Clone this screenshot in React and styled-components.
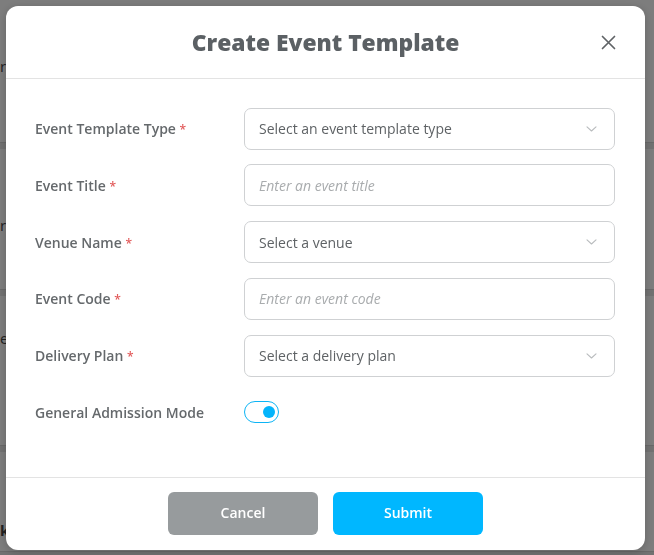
import React, { useState } from 'react';
import styled, { createGlobalStyle } from 'styled-components';

const GlobalStyle = createGlobalStyle`
    html, body {
        margin: 0;
        padding: 0;
        height: 100%;
    }
    body {
        font-family: "Open Sans", "Liberation Sans", sans-serif;
        background: #f7f7f7;
        overflow: hidden;
    }
`;

const fields = [
    { label: 'Event Template Type', type: 'select', placeholder: 'Select an event template type' },
    { label: 'Event Title', type: 'input', placeholder: 'Enter an event title' },
    { label: 'Venue Name', type: 'select', placeholder: 'Select a venue' },
    { label: 'Event Code', type: 'input', placeholder: 'Enter an event code' },
    { label: 'Delivery Plan', type: 'select', placeholder: 'Select a delivery plan' },
];

function Chevron() {
    return (
        <svg width="11" height="6" viewBox="0 0 11 6" fill="none">
            <path d="M1 0.8L5.5 5L10 0.8" stroke="#b9bcbe" strokeWidth="1.1" strokeLinecap="round" strokeLinejoin="round" />
        </svg>
    );
}

function CloseIcon() {
    return (
        <svg width="15" height="15" viewBox="0 0 15 15" fill="none">
            <path d="M1.5 1.5L13.5 13.5M13.5 1.5L1.5 13.5" stroke="#5f6366" strokeWidth="1.7" strokeLinecap="round" />
        </svg>
    );
}

function App() {
    const [gaMode, setGaMode] = useState(true);

    return (
        <>
            <GlobalStyle />
            <BackPage>
                <BackBlock height={143}><BackText top={56}>r</BackText></BackBlock>
                <BackBlock height={141}><BackText top={66}>r</BackText></BackBlock>
                <BackBlock height={150}><BackText top={32}>e</BackText></BackBlock>
                <BackBlock height={100}><BackText top={68} bold>k</BackText></BackBlock>
            </BackPage>
            <Overlay>
                <Modal>
                    <Header>
                        <Title>Create Event Template</Title>
                        <CloseButton aria-label="Close"><CloseIcon /></CloseButton>
                    </Header>
                    <Body>
                        {fields.map((f) => (
                            <Row key={f.label}>
                                <Label>{f.label} <Req>*</Req></Label>
                                {f.type === 'select' ? (
                                    <SelectBox>
                                        <span>{f.placeholder}</span>
                                        <Chevron />
                                    </SelectBox>
                                ) : (
                                    <TextInput placeholder={f.placeholder} />
                                )}
                            </Row>
                        ))}
                        <Row>
                            <Label>General Admission Mode</Label>
                            <Toggle on={gaMode} onClick={() => setGaMode(!gaMode)}>
                                <Knob on={gaMode} />
                            </Toggle>
                        </Row>
                    </Body>
                    <Footer>
                        <Button variant="cancel">Cancel</Button>
                        <Button variant="submit">Submit</Button>
                    </Footer>
                </Modal>
            </Overlay>
        </>
    );
}

const BackPage = styled.div`
    display: flex;
    flex-direction: column;
    background: #fafafa;
    height: 100vh;
`;

const BackBlock = styled.div`
    height: ${(p) => p.height}px;
    border-bottom: 6px solid #e4e4e4;
    box-shadow: inset 0 -1px 0 #d2d2d2;
    flex-shrink: 0;
`;

const BackText = styled.div`
    margin-top: ${(p) => p.top}px;
    font-size: 15px;
    line-height: 20px;
    font-weight: ${(p) => (p.bold ? 700 : 400)};
    color: #444;
`;

const Overlay = styled.div`
    position: fixed;
    inset: 0;
    background: rgba(0, 0, 0, 0.5);
    padding: 6px 9px 5px 6px;
    display: flex;
`;

const Modal = styled.div`
    width: 639px;
    height: 544px;
    background: #fff;
    border-radius: 12px;
    box-shadow: 0 2px 10px rgba(0, 0, 0, 0.2);
    display: flex;
    flex-direction: column;
    overflow: hidden;
`;

const Header = styled.div`
    height: 72px;
    flex-shrink: 0;
    display: flex;
    align-items: center;
    justify-content: center;
    position: relative;
    border-bottom: 1px solid #e3e3e3;
`;

const Title = styled.h2`
    margin: 0;
    font-size: 22.8px;
    font-weight: 800;
    color: #5b6064;
`;

const CloseButton = styled.button`
    position: absolute;
    right: 29px;
    top: 29px;
    background: none;
    border: none;
    padding: 0;
    width: 15px;
    height: 15px;
    cursor: pointer;
    display: flex;
`;

const Body = styled.div`
    flex: 1;
    padding: 28.5px 30px 0 29px;
    display: flex;
    flex-direction: column;
    gap: 14.75px;
`;

const Row = styled.div`
    display: grid;
    grid-template-columns: 209px 1fr;
    align-items: center;
    height: 42px;
`;

const Label = styled.label`
    font-size: 14px;
    font-weight: 600;
    color: #65696c;
`;

const Req = styled.span`
    color: #e25b5b;
    font-size: 12px;
    font-weight: 600;
`;

const fieldBase = `
    box-sizing: border-box;
    width: 100%;
    height: 42px;
    border: 1px solid #cfd1d3;
    border-radius: 7px;
    background: #fff;
    padding: 0 14px;
    font-family: "Open Sans", "Liberation Sans", sans-serif;
    font-size: 14px;
`;

const SelectBox = styled.div`
    ${fieldBase}
    display: flex;
    align-items: center;
    justify-content: space-between;
    color: #5e6265;
    padding-right: 17px;
`;

const TextInput = styled.input`
    ${fieldBase}
    outline: none;
    color: #333;
    &::placeholder {
        color: #a9acae;
        font-style: italic;
    }
`;

const Toggle = styled.button`
    box-sizing: border-box;
    width: 35px;
    height: 22px;
    border-radius: 11px;
    border: 1.5px solid ${(p) => (p.on ? '#0db4f5' : '#c5c7c9')};
    background: #fff;
    padding: 0 3.5px;
    display: flex;
    align-items: center;
    justify-content: ${(p) => (p.on ? 'flex-end' : 'flex-start')};
    cursor: pointer;
`;

const Knob = styled.span`
    width: 12px;
    height: 12px;
    border-radius: 50%;
    background: ${(p) => (p.on ? '#04b4fb' : '#c5c7c9')};
`;

const Footer = styled.div`
    height: 73px;
    flex-shrink: 0;
    border-top: 1px solid #e3e3e3;
    display: flex;
    justify-content: center;
    gap: 15px;
    padding-top: 14px;
    box-sizing: border-box;
`;

const Button = styled.button`
    width: 150px;
    height: 43px;
    border: none;
    border-radius: 6px;
    padding: 0 0 3px;
    font-family: "Open Sans", "Liberation Sans", sans-serif;
    font-size: 14px;
    font-weight: 600;
    color: #fff;
    background: ${(p) => (p.variant === 'submit' ? '#00b7ff' : '#979b9d')};
    cursor: pointer;
`;

export default App;
